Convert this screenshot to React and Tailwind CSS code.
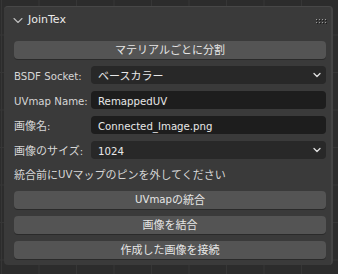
const FONT = { fontFamily: '"DejaVu Sans", "Noto Sans CJK JP", sans-serif' }

// Latin runs are a bit smaller than the CJK runs, as in Blender's UI
function T({ children }) {
  const parts = children.split(/([\u3000-\u30ff\u4e00-\u9fff\uff00-\uffef]+)/)
  return parts.map((p, i) =>
    p ? (
      <span key={i} className={i % 2 ? 'text-[11px]' : 'text-[10.2px]'}>
        {p}
      </span>
    ) : null
  )
}

function Button({ children }) {
  return (
    <div className="h-[18px] rounded-[4px] bg-[#545454] flex items-center justify-center text-[#e6e6e6] leading-none shadow-[0_1px_0_#2a2a2a]">
      <T>{children}</T>
    </div>
  )
}

function Chevron() {
  return (
    <svg width="8" height="6" viewBox="0 0 8 6" className="shrink-0">
      <path d="M1 1.5 L4 4.5 L7 1.5" fill="none" stroke="#e0e0e0" strokeWidth="1.3" strokeLinecap="round" strokeLinejoin="round" />
    </svg>
  )
}

function Row({ label, value, kind }) {
  const field = kind === 'text' ? 'bg-[#1d1d1d]' : 'bg-[#282828]'
  return (
    <div className="h-[18px] flex items-center leading-none">
      <div className="w-[77px] shrink-0 text-[#d6d6d6] whitespace-nowrap">
        <T>{label}</T>
      </div>
      <div className={`flex-1 h-full rounded-[4px] ${field} flex items-center pl-[7px] pr-[5px] text-[#e8e8e8]`}>
        <span className="flex-1">
          <T>{value}</T>
        </span>
        {kind === 'menu' && <Chevron />}
      </div>
    </div>
  )
}

export default function App() {
  return (
    <div
      style={FONT}
      className="w-[338px] h-[274px] overflow-hidden bg-[#2c2c2c] bg-[linear-gradient(to_right,#363636_1px,transparent_1px),linear-gradient(to_bottom,#363636_1px,transparent_1px)] bg-[size:37.5px_37.5px] bg-[position:1px_-3px] pt-[6px] pl-[4px]"
    >
      <div className="w-[329px] h-[259px] rounded-[4px] bg-[#3a3a3a] border-t border-[#474747] border-r-2 border-r-[#444444]">
        <div className="h-[27px] flex items-center pl-[9px] pr-[5px]">
          <svg width="10" height="7" viewBox="0 0 10 7" className="mr-[5px]">
            <path d="M1 1.5 L5 5.5 L9 1.5" fill="none" stroke="#bdbdbd" strokeWidth="1.1" strokeLinecap="round" strokeLinejoin="round" />
          </svg>
          <span className="flex-1 text-[11px] text-[#ebebeb]">JoinTex</span>
          <div className="grid grid-cols-4 gap-x-[2px] gap-y-[2px]">
            {Array.from({ length: 8 }).map((_, i) => (
              <div key={i} className="w-[1px] h-[1px] bg-[#9a9a9a] shadow-[1px_1px_0_#1a1a1a]" />
            ))}
          </div>
        </div>

        <div className="flex flex-col gap-[7px] pt-[7px] pl-[10px] pr-[5px]">
          <Button>マテリアルごとに分割</Button>
          <Row label="BSDF Socket:" value="ベースカラー" kind="menu" />
          <Row label="UVmap Name:" value="RemappedUV" kind="text" />
          <Row label="画像名:" value="Connected_Image.png" kind="text" />
          <Row label="画像のサイズ:" value="1024" kind="menu" />
          <div className="h-[18px] flex items-center text-[#d6d6d6] leading-none">
            <T>統合前にUVマップのピンを外してください</T>
          </div>
          <Button>UVmapの統合</Button>
          <Button>画像を結合</Button>
          <Button>作成した画像を接続</Button>
        </div>
      </div>
    </div>
  )
}
